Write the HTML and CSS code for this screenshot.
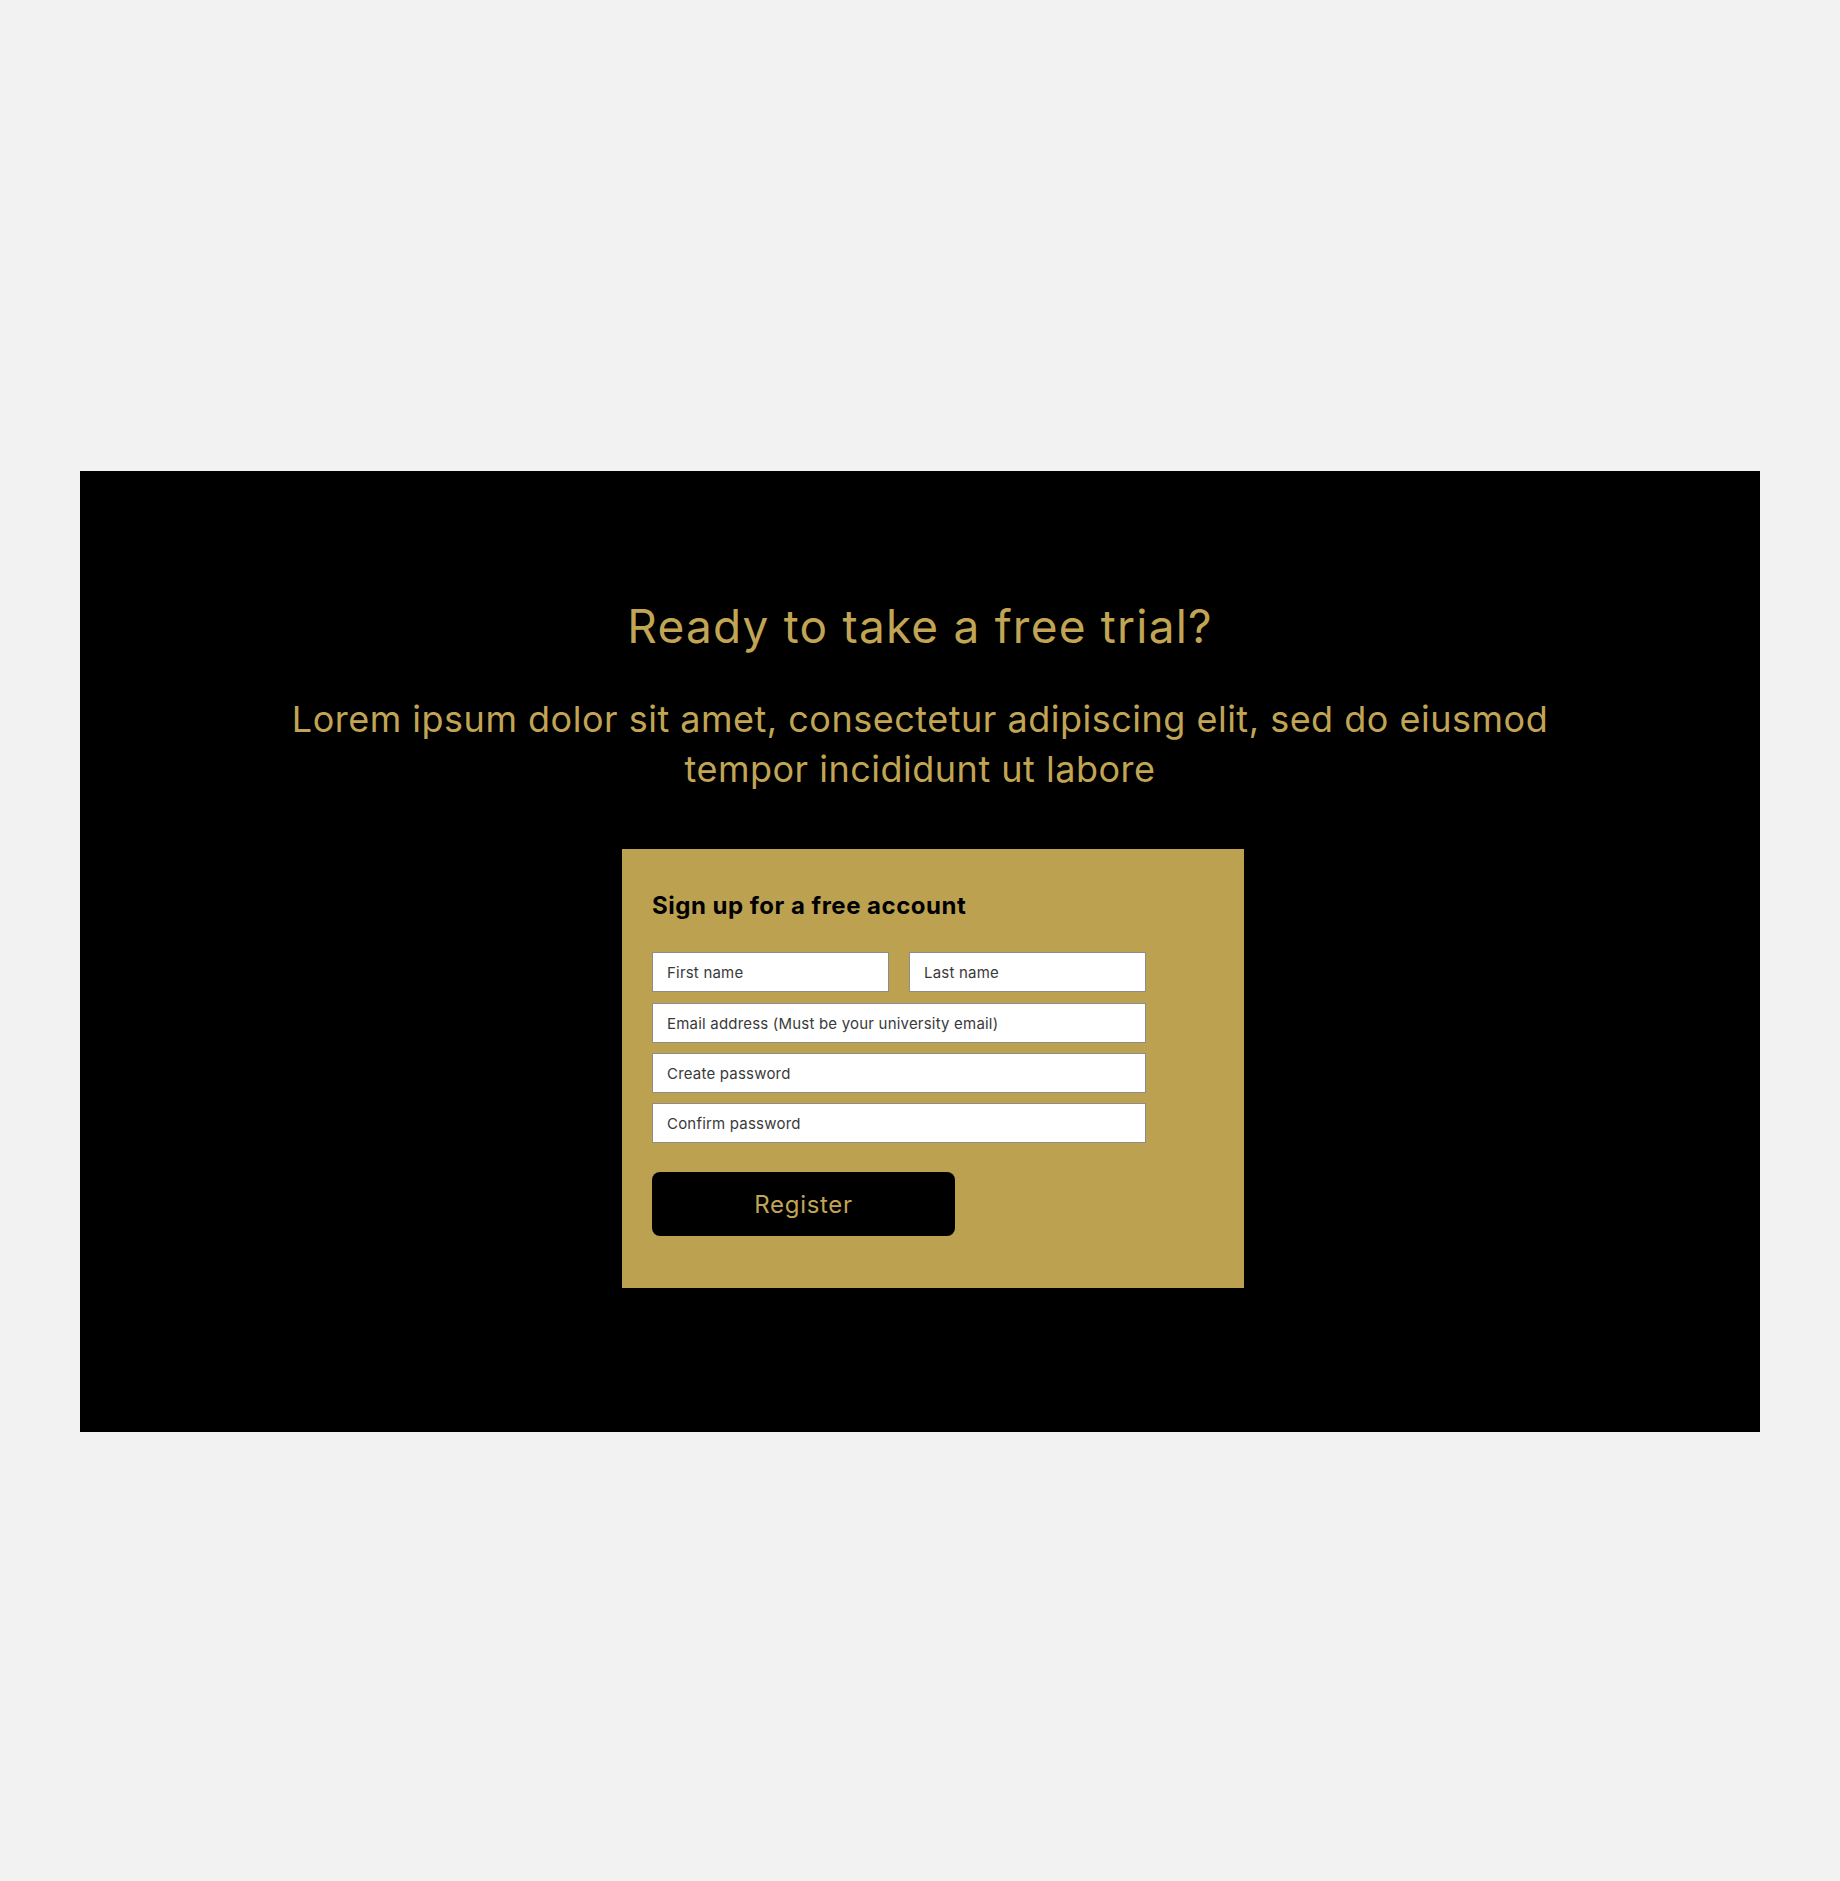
FILE: index.html
```html
<!DOCTYPE html>
<html lang="en">
<head>
<meta charset="utf-8">
<title>Free trial</title>
<link rel="stylesheet" href="styles.css">
</head>
<body>
<main class="page">
  <section class="trial">
    <h1 class="trial-title">Ready to take a free trial?</h1>
    <p class="trial-lead">Lorem ipsum dolor sit amet, consectetur adipiscing elit, sed do eiusmod<br>tempor incididunt ut labore</p>
    <form class="card">
      <h2 class="card-title">Sign up for a free account</h2>
      <div class="fields">
        <div class="row">
          <input class="field field-half" type="text" placeholder="First name">
          <input class="field field-half" type="text" placeholder="Last name">
        </div>
        <input class="field" type="email" placeholder="Email address (Must be your university email)">
        <input class="field" type="password" placeholder="Create password">
        <input class="field" type="password" placeholder="Confirm password">
      </div>
      <button class="register" type="button">Register</button>
    </form>
  </section>
</main>
</body>
</html>
```

FILE: styles.css
```css
html, body {
  margin: 0;
  padding: 0;
  background: #f2f2f2;
}

body {
  font-family: Inter, "Noto Sans", "Liberation Sans", sans-serif;
}

.page {
  padding: 471px 80px 449px;
}

.trial {
  background: #000;
  height: 961px;
  box-sizing: border-box;
  padding-top: 127px;
  display: flex;
  flex-direction: column;
}

.trial-title {
  margin: 0;
  text-align: center;
  color: #c1a555;
  font-size: 46px;
  line-height: 56px;
  font-weight: 400;
  letter-spacing: 1.2px;
}

.trial-lead {
  margin: 40px 0 0;
  text-align: center;
  color: #c1a555;
  font-size: 36px;
  line-height: 50px;
  font-weight: 400;
  letter-spacing: 0.5px;
}

.card {
  width: 622px;
  box-sizing: border-box;
  margin: 55px 0 0 542px;
  background: #bca150;
  padding: 42px 30px 52px;
  display: flex;
  flex-direction: column;
  align-items: flex-start;
}

.card-title {
  margin: 0;
  color: #000;
  font-size: 24px;
  line-height: 30px;
  font-weight: 700;
  letter-spacing: 0.5px;
}

.fields {
  margin-top: 31px;
  width: 494px;
  display: flex;
  flex-direction: column;
  gap: 10px;
}

.row {
  display: flex;
  gap: 20px;
  margin-bottom: 1px;
}

.field {
  flex: none;
  width: 100%;
  height: 40px;
  box-sizing: border-box;
  border: 1px solid #8c8c8c;
  background: #fff;
  padding: 0 14px;
  font-family: inherit;
  font-size: 15px;
  letter-spacing: 0.2px;
  color: #333;
  outline: none;
  margin: 0;
}

.field-half {
  flex: 1 1 0;
  width: auto;
  min-width: 0;
}

.field::placeholder {
  color: #3a3a3a;
  opacity: 1;
}

.register {
  margin-top: 29px;
  width: 303px;
  height: 64px;
  border: none;
  border-radius: 8px;
  background: #000;
  color: #c1a555;
  font-family: inherit;
  font-size: 24px;
  font-weight: 400;
  letter-spacing: 0.7px;
  cursor: pointer;
}
```
